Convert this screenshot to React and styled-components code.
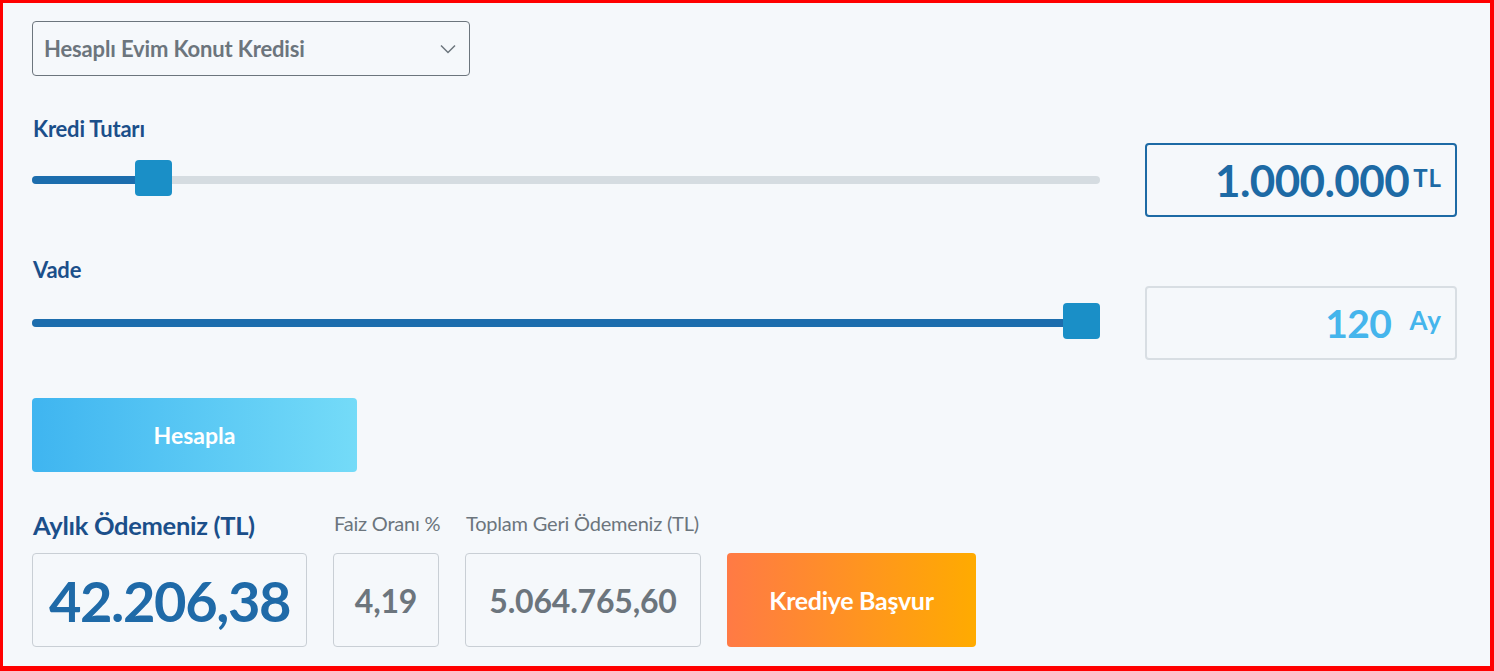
import React from 'react'
import styled, { createGlobalStyle } from 'styled-components'

const GlobalStyle = createGlobalStyle`
    * { box-sizing: border-box; }
    html, body {
        margin: 0;
        padding: 0;
        background: #f5f8fb;
    }
    body {
        font-family: 'Lato', 'Liberation Sans', sans-serif;
    }
`

const Frame = styled.div`
    width: 1494px;
    height: 671px;
    border-style: solid;
    border-color: #ff0000;
    border-width: 3px 4px 5px 3px;
    background: #f5f8fb;
    padding: 18px 34px 0 29px;
    display: flex;
    flex-direction: column;
`

const Select = styled.div`
    width: 438px;
    height: 55px;
    border: 1px solid #6c757d;
    border-radius: 4px;
    display: flex;
    align-items: center;
    justify-content: space-between;
    padding: 0 13px 0 11px;
    color: #6c757d;
    font-size: 22px;
    font-weight: 700;
    letter-spacing: -0.15px;
`

const Field = styled.div`
    display: grid;
    grid-template-columns: 1068px 312px;
    column-gap: 45px;
    row-gap: ${({ $gap }) => $gap}px;
    align-items: center;
    margin-top: ${({ $top }) => $top}px;
`

const Label = styled.div`
    grid-column: 1 / 3;
    font-size: 22px;
    line-height: 26px;
    font-weight: 700;
    color: #1b4f8a;
    letter-spacing: -0.2px;
    padding-left: 1px;
`

const Track = styled.div`
    position: relative;
    height: 8px;
    border-radius: 4px;
    background: #d5dce1;
`

const Fill = styled.div`
    height: 100%;
    border-radius: 4px 0 0 4px;
    background: #1c6dad;
`

const Thumb = styled.div`
    position: absolute;
    top: 50%;
    width: 37px;
    height: 36px;
    margin-top: -20px;
    border-radius: 4px;
    background: #1a8fc7;
`

const ValueBox = styled.div`
    height: 74px;
    border: ${({ $active }) => ($active ? '2px solid #1d6aa5' : '2px solid #d8dee3')};
    border-radius: 4px;
    display: flex;
    align-items: center;
    justify-content: flex-end;
    padding-right: 13px;
    gap: ${({ $gap }) => $gap}px;
    color: ${({ $active }) => ($active ? '#1d6aa5' : '#45b5ec')};
    font-weight: 700;
`

const BigValue = styled.span`
    font-size: ${({ $size }) => $size}px;
    letter-spacing: -0.6px;
`

const Unit = styled.span`
    font-size: ${({ $size }) => $size}px;
    letter-spacing: 1px;
    position: relative;
    top: -3px;
`

const CalcButton = styled.button`
    width: 325px;
    height: 74px;
    margin-top: 38px;
    border: none;
    border-radius: 4px;
    background: linear-gradient(90deg, #3fb5f0, #74dbf8);
    color: #fff;
    font-family: inherit;
    font-size: 23px;
    font-weight: 700;
`

const Results = styled.div`
    display: flex;
    align-items: flex-end;
    gap: 26px;
    margin-top: 38px;
`

const Column = styled.div`
    width: ${({ $w }) => $w}px;
    display: flex;
    flex-direction: column;
    gap: ${({ $gap }) => $gap}px;
`

const ResultLabel = styled.div`
    font-size: ${({ $main }) => ($main ? '25.5px' : '20px')};
    line-height: ${({ $main }) => ($main ? '30px' : '24px')};
    font-weight: ${({ $main }) => ($main ? 700 : 400)};
    color: ${({ $main }) => ($main ? '#1b4f8a' : '#6c757d')};
    letter-spacing: ${({ $main }) => ($main ? '-0.3px' : '-0.2px')};
    white-space: nowrap;
    padding-left: 1px;
`

const ResultBox = styled.div`
    height: 94px;
    border: 1px solid #c9cfd5;
    border-radius: 4px;
    display: flex;
    align-items: center;
    justify-content: center;
    font-weight: 700;
    font-size: ${({ $size }) => $size}px;
    color: ${({ $blue }) => ($blue ? '#1f6aa8' : '#6c757d')};
    letter-spacing: ${({ $blue }) => ($blue ? '-1.4px' : '-0.2px')};
`

const ApplyButton = styled.button`
    width: 249px;
    height: 94px;
    border: none;
    border-radius: 4px;
    background: linear-gradient(90deg, #ff7a45, #ffab00);
    color: #fff;
    font-family: inherit;
    font-size: 25px;
    font-weight: 700;
    letter-spacing: -0.3px;
`

const Chevron = () => (
    <svg width="16" height="10" viewBox="0 0 16 10" fill="none">
        <polyline points="1,1.5 8,8.5 15,1.5" stroke="#6c757d" strokeWidth="1.5" />
    </svg>
)

const Slider = ({ percent }) => (
    <Track>
        <Fill style={{ width: `${percent}%` }} />
        <Thumb style={{ left: `calc(${percent}% - ${percent / 100 * 37}px)` }} />
    </Track>
)

const App = () => {
    return (
        <>
            <GlobalStyle />
            <Frame>
                <Select>
                    <span>Hesaplı Evim Konut Kredisi</span>
                    <Chevron />
                </Select>

                <Field $top={40} $gap={1}>
                    <Label>Kredi Tutarı</Label>
                    <Slider percent={10} />
                    <ValueBox $active $gap={4}>
                        <BigValue $size={44}>1.000.000</BigValue>
                        <Unit $size={24}>TL</Unit>
                    </ValueBox>
                </Field>

                <Field $top={40} $gap={3}>
                    <Label>Vade</Label>
                    <Slider percent={100} />
                    <ValueBox $gap={18}>
                        <BigValue $size={39}>120</BigValue>
                        <Unit $size={26}>Ay</Unit>
                    </ValueBox>
                </Field>

                <CalcButton>Hesapla</CalcButton>

                <Results>
                    <Column $w={275} $gap={13}>
                        <ResultLabel $main>Aylık Ödemeniz (TL)</ResultLabel>
                        <ResultBox $size={56} $blue>42.206,38</ResultBox>
                    </Column>
                    <Column $w={106} $gap={18}>
                        <ResultLabel>Faiz Oranı %</ResultLabel>
                        <ResultBox $size={32}>4,19</ResultBox>
                    </Column>
                    <Column $w={236} $gap={18}>
                        <ResultLabel>Toplam Geri Ödemeniz (TL)</ResultLabel>
                        <ResultBox $size={32}>5.064.765,60</ResultBox>
                    </Column>
                    <ApplyButton>Krediye Başvur</ApplyButton>
                </Results>
            </Frame>
        </>
    )
}

export default App
